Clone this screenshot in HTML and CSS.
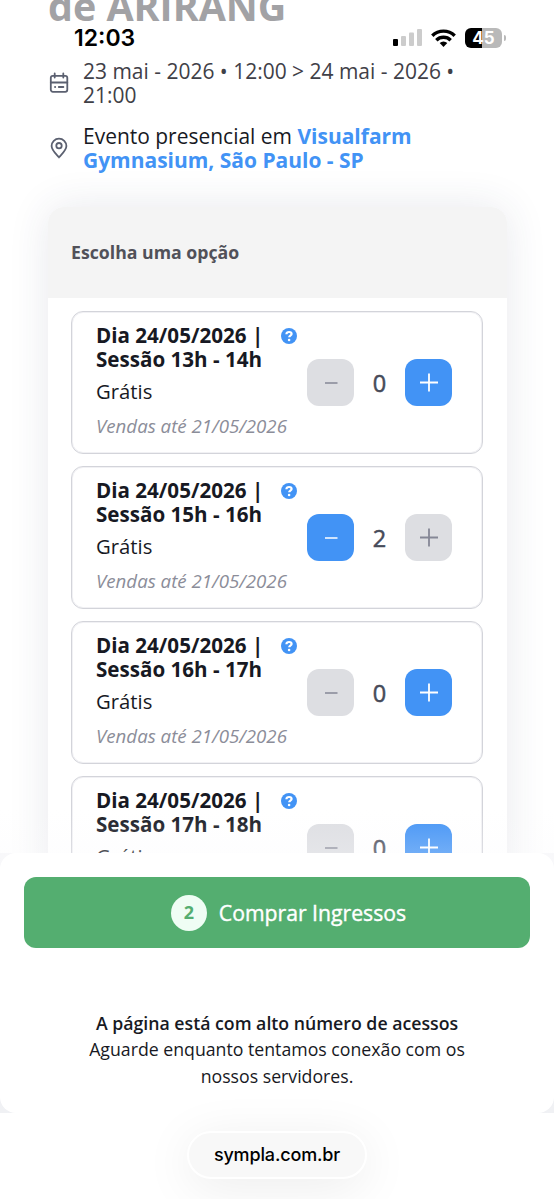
FILE: index.html
```html
<!DOCTYPE html>
<html lang="pt-BR">
<head>
<meta charset="utf-8">
<title>Sympla</title>
<link rel="stylesheet" href="styles.css">
</head>
<body>
<svg class="defs" aria-hidden="true">
  <symbol id="help" viewBox="0 0 16 16"><circle cx="8" cy="8" r="8" fill="#4293f5"/><path d="M5.400 6.300C5.500 4.700 6.600 4 8.100 4c1.500 0 2.500.8 2.500 2 0 1.700-2.400 1.700-2.400 3.300" fill="none" stroke="#fff" stroke-width="2.200"/><circle cx="8.100" cy="12" r="1.300" fill="#fff"/></symbol>
  <symbol id="minus" viewBox="0 0 20 20"><path d="M4 10h12.500" stroke="currentColor" stroke-width="1.500"/></symbol>
  <symbol id="plus" viewBox="0 0 20 20"><path d="M1 9.500h18M10 .5v18" stroke="currentColor" stroke-width="1.800"/></symbol>
</svg>
<div class="phone">
  <header class="status">
    <span class="clock">12:03</span>
    <div class="indicators">
      <svg width="29" height="17" viewBox="0 0 29 17"><g fill="#ccc"><rect x="8" y="7" width="5" height="10" rx="1"/><rect x="16" y="3.500" width="5" height="13.500" rx="1"/><rect x="24" y="0" width="5" height="17" rx="1"/></g><rect x="0" y="10" width="5" height="7" rx="1"/></svg>
      <svg width="25" height="18" viewBox="0 0 25 18"><g fill="none" stroke="#000" stroke-width="3.400"><path d="M1.300 6.700a16 16 0 0 1 22.400 0"/><path d="M5.300 11.200a10.300 10.300 0 0 1 14.400 0"/></g><path d="M8.700 14.100a5.500 5.500 0 0 1 7.600 0L12.500 18z"/></svg>
      <div class="battery"><span class="level">45</span><i class="cap"></i></div>
    </div>
  </header>
  <main class="page">
    <h1 class="title">de ARIRANG</h1>
    <div class="info date">
      <svg width="22" height="22" viewBox="0 0 22 22" fill="none" stroke="#5b6070" stroke-width="1.800" stroke-linecap="round"><rect x="2.800" y="3.800" width="16.500" height="16" rx="2"/><path d="M2.800 10.500h16.500M6.700 1.500v4M15.300 1.500v4M7 15h.2M10.800 15h4.600"/></svg>
      <p>23 mai - 2026 • 12:00 &gt; 24 mai - 2026 •<br>21:00</p>
    </div>
    <div class="info place">
      <svg width="22" height="22" viewBox="0 0 22 22" fill="none" stroke="#5b6070" stroke-width="1.800"><path d="M11 20.300C9 17.800 3.600 13.400 3.600 9a7.400 7.400 0 0 1 14.800 0c0 4.400-5.400 8.800-7.400 11.300z"/><circle cx="11" cy="8.700" r="2.700"/></svg>
      <p>Evento presencial em <b>Visualfarm<br>Gymnasium, São Paulo - SP</b></p>
    </div>
    <section class="tickets">
      <h2 class="heading">Escolha uma opção</h2>
      <div class="list">
        <article class="ticket">
          <div class="text"><h3>Dia 24/05/2026 |<br>Sessão 13h - 14h</h3><p class="price">Grátis</p><p class="until">Vendas até 21/05/2026</p></div>
          <svg class="help"><use href="#help"/></svg>
          <div class="stepper"><span class="btn off"><svg><use href="#minus"/></svg></span><span class="qty">0</span><span class="btn"><svg><use href="#plus"/></svg></span></div>
        </article>
        <article class="ticket">
          <div class="text"><h3>Dia 24/05/2026 |<br>Sessão 15h - 16h</h3><p class="price">Grátis</p><p class="until">Vendas até 21/05/2026</p></div>
          <svg class="help"><use href="#help"/></svg>
          <div class="stepper"><span class="btn"><svg><use href="#minus"/></svg></span><span class="qty">2</span><span class="btn off"><svg><use href="#plus"/></svg></span></div>
        </article>
        <article class="ticket">
          <div class="text"><h3>Dia 24/05/2026 |<br>Sessão 16h - 17h</h3><p class="price">Grátis</p><p class="until">Vendas até 21/05/2026</p></div>
          <svg class="help"><use href="#help"/></svg>
          <div class="stepper"><span class="btn off"><svg><use href="#minus"/></svg></span><span class="qty">0</span><span class="btn"><svg><use href="#plus"/></svg></span></div>
        </article>
        <article class="ticket">
          <div class="text"><h3>Dia 24/05/2026 |<br>Sessão 17h - 18h</h3><p class="price">Grátis</p></div>
          <svg class="help"><use href="#help"/></svg>
          <div class="stepper"><span class="btn off"><svg><use href="#minus"/></svg></span><span class="qty">0</span><span class="btn"><svg><use href="#plus"/></svg></span></div>
        </article>
      </div>
    </section>
    <div class="fade"></div>
  </main>
  <div class="sheet-wrap">
    <section class="sheet">
      <div class="buy"><span class="count">2</span><span class="label">Comprar Ingressos</span></div>
      <p class="notice"><b>A página está com alto número de acessos</b><br>Aguarde enquanto tentamos conexão com os<br>nossos servidores.</p>
    </section>
  </div>
  <footer class="browser"><span class="url">sympla.com.br</span></footer>
</div>
</body>
</html>
```
FILE: styles.css
```css
* { box-sizing: border-box; }
body { margin: 0; background: #fff; font-family: "Open Sans", "Noto Sans", sans-serif; color: #171923; }
h1, h2, h3, p { margin: 0; }
svg { display: block; flex: none; }
.defs { position: absolute; width: 0; height: 0; }
.phone { position: relative; width: 554px; height: 1199px; overflow: hidden; display: flex; flex-direction: column; }
.status { position: absolute; z-index: 2; top: 0; left: 0; width: 100%; height: 75px; padding: 0 49px 0 74px; display: flex; align-items: center; justify-content: space-between; }
.clock { font: 600 23px/28px Inter, sans-serif; color: #000; }
.indicators { display: flex; align-items: center; gap: 9px; }
.battery { position: relative; width: 37px; height: 20px; border-radius: 6px; background: linear-gradient(90deg, #000 45%, #b9b9b9 45%); margin-right: 3px; }
.level { display: block; text-align: center; font: 700 17px/20px Inter, sans-serif; color: #fff; }
.cap { position: absolute; right: -4px; top: 7px; width: 2px; height: 6px; border-radius: 0 2px 2px 0; background: #b9b9b9; }
.page { position: relative; height: 853px; flex: none; overflow: hidden; padding: 0 48px; }
.title { height: 59px; font-size: 39.4px; line-height: 40px; color: #a2a2a5; transform: translateY(-14px); white-space: nowrap; }
.info { display: flex; align-items: center; gap: 13px; font-size: 20.97px; line-height: 24px; white-space: nowrap; }
.date { color: #3f4047; }
.place { margin-top: 17px; }
.place b { color: #4293f5; }
.tickets { margin: 35px -1px 0 0; height: 900px; border-radius: 16px; background: #fff; box-shadow: 0 0 42px rgba(45, 55, 90, .11); overflow: hidden; }
.heading { height: 91px; padding-left: 23px; background: #f4f4f4; font-size: 17.7px; line-height: 91px; color: #515159; }
.list { display: flex; flex-direction: column; gap: 12px; padding: 13px 24px 0 23px; }
.ticket { height: 143px; border: 1px solid #d3d4da; box-shadow: inset 0 0 0 1px #f1f1f4; border-radius: 12px; padding: 11px 30px 0 24px; display: flex; }
.text { width: 185px; white-space: nowrap; }
.ticket h3 { font-size: 20.6px; line-height: 24px; }
.price { margin-top: 6px; font-size: 20.3px; line-height: 28px; }
.until { margin-top: 10px; font-size: 18.7px; line-height: 22px; font-style: italic; color: #8b8d99; }
.help { width: 16px; height: 16px; margin-top: 5px; }
.stepper { margin: 36px 0 0 auto; height: 47px; width: 145px; display: flex; justify-content: space-between; align-items: center; }
.btn { width: 47px; height: 47px; border-radius: 12px; background: #4293f5; color: #fff; display: flex; align-items: center; justify-content: center; }
.btn svg { width: 20px; height: 20px; }
.off { background: #dddee2; color: #858796; }
.qty { font-size: 23.5px; color: #474b59; -webkit-text-stroke: .5px #474b59; }
.fade { position: absolute; left: 0; right: 0; bottom: 0; height: 44px; background: linear-gradient(rgba(250, 250, 252, 0), rgba(250, 250, 252, .25)); }
.sheet-wrap { height: 260px; flex: none; background: linear-gradient(#f8f8fa, #f0f1f4); }
.sheet { height: 260px; border-radius: 16px; background: #fff; padding: 24px 24px 0; }
.buy { height: 71px; border-radius: 12px; background: #54ae70; color: #fff; display: flex; align-items: center; justify-content: center; gap: 12px; padding-left: 23px; font-size: 21.2px; }
.label { -webkit-text-stroke: .4px #fff; }
.count { width: 36px; height: 36px; border-radius: 50%; background: #effdf4; color: #54ae70; font-size: 18px; font-weight: 700; line-height: 35px; text-align: center; }
.notice { margin-top: 61.5px; text-align: center; font-size: 17.72px; line-height: 26.5px; white-space: nowrap; }
.notice b { font-weight: 600; }
.browser { height: 86px; display: flex; justify-content: center; padding-top: 18px; }
.url { width: 180px; height: 48px; border-radius: 24px; border: 2px solid #fff; background: #f8f8f8; box-shadow: 0 8px 50px rgba(0,0,0,.08); text-align: center; font: 500 18px/44px Inter, sans-serif; letter-spacing: -.15px; color: #000; }
```
